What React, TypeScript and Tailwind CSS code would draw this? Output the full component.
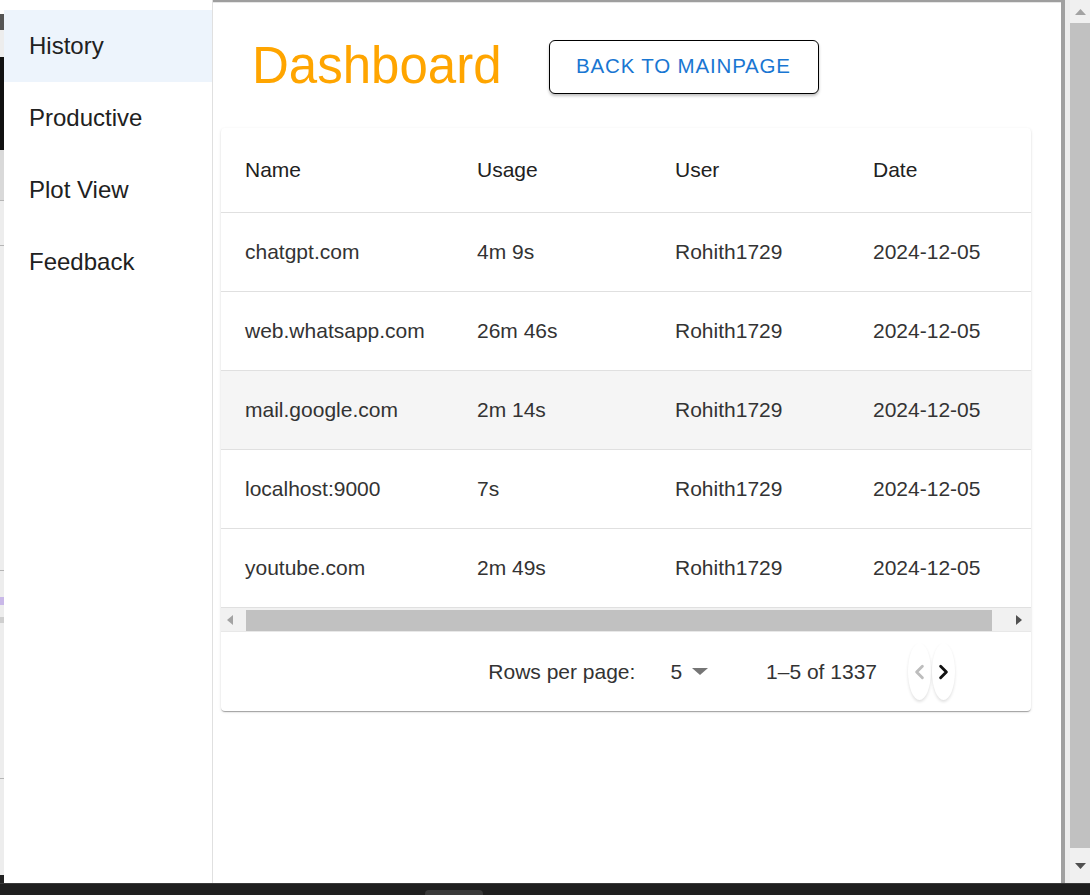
import { ChevronLeft, ChevronRight } from 'lucide-react';

const rows = [
  { name: 'chatgpt.com', usage: '4m 9s', user: 'Rohith1729', date: '2024-12-05' },
  { name: 'web.whatsapp.com', usage: '26m 46s', user: 'Rohith1729', date: '2024-12-05' },
  { name: 'mail.google.com', usage: '2m 14s', user: 'Rohith1729', date: '2024-12-05' },
  { name: 'localhost:9000', usage: '7s', user: 'Rohith1729', date: '2024-12-05' },
  { name: 'youtube.com', usage: '2m 49s', user: 'Rohith1729', date: '2024-12-05' },
];

const navItems = ['History', 'Productive', 'Plot View', 'Feedback'];

// bits of the page behind the popup, peeking out on the left
function BackdropStrip() {
  return (
    <div className="flex w-[4px] flex-col bg-[#ededed]">
      <div className="h-[14px] bg-white" />
      <div className="h-[16px] bg-[#555]" />
      <div className="h-[27px]" />
      <div className="h-[93px] bg-[#111]" />
      <div className="h-[50px] bg-[#d9d9d9]" />
      <div className="h-[1px] bg-[#b5b5b5]" />
      <div className="h-[44px]" />
      <div className="h-[1px] bg-[#b5b5b5]" />
      <div className="h-[324px]" />
      <div className="h-[1px] bg-[#b5b5b5]" />
      <div className="h-[26px]" />
      <div className="h-[8px] bg-[#c9b8e8]" />
      <div className="h-[12px]" />
      <div className="h-[6px] bg-[#cfcfcf]" />
      <div className="h-[155px]" />
      <div className="h-[1px] bg-[#b5b5b5]" />
      <div className="flex-1" />
      <div className="h-[8px] bg-[#222]" />
    </div>
  );
}

function Sidebar() {
  return (
    <div className="flex w-[209px] flex-col border-r border-[#e0e0e0] bg-white pt-[10px]">
      {navItems.map((item, i) => (
        <div
          key={item}
          className={
            i === 0
              ? 'flex h-[72px] items-center bg-[#edf4fc] pl-[25px] text-[24px] text-[#212121]'
              : 'flex h-[72px] items-center pl-[25px] text-[24px] text-[#212121]'
          }
        >
          {item}
        </div>
      ))}
    </div>
  );
}

function TableScrollbar() {
  return (
    <div className="flex h-[24px] items-center bg-[#f1f1f1] border-b border-[#e8e8e8]">
      <div className="flex w-[17px] justify-center">
        <svg width="6" height="10" viewBox="0 0 6 10">
          <polygon points="6,0 6,10 0,5" fill="#a3a3a3" />
        </svg>
      </div>
      <div className="ml-[8px] h-[21px] w-[746px] self-end bg-[#c1c1c1]" />
      <div className="flex flex-1 justify-end pr-[9px]">
        <svg width="6" height="10" viewBox="0 0 6 10">
          <polygon points="0,0 0,10 6,5" fill="#505050" />
        </svg>
      </div>
    </div>
  );
}

function Pagination() {
  return (
    <div className="flex h-[79px] items-center justify-end pr-[76px] text-[21px] text-[#333]">
      <span>Rows per page:</span>
      <span className="ml-[35px]">5</span>
      <svg className="ml-[10px]" width="16" height="7" viewBox="0 0 16 7">
        <polygon points="0,0 16,0 8,7" fill="#757575" />
      </svg>
      <span className="ml-[58px]">1–5 of 1337</span>
      <div className="ml-[31px] flex">
        <div className="flex h-[57px] w-[23px] items-center justify-center rounded-[50%] bg-white shadow-[0_2px_3px_rgba(0,0,0,0.12)]">
          <ChevronLeft size={24} strokeWidth={3} className="text-[#bdbdbd]" />
        </div>
        <div className="ml-[1px] flex h-[57px] w-[23px] items-center justify-center rounded-[50%] bg-white shadow-[0_2px_3px_rgba(0,0,0,0.12)]">
          <ChevronRight size={24} strokeWidth={3} className="text-[#111]" />
        </div>
      </div>
    </div>
  );
}

function UsageTable() {
  return (
    <div className="w-[810px] overflow-hidden rounded-[4px] bg-white shadow-[0px_2px_1px_-1px_rgba(0,0,0,0.2),0px_1px_1px_0px_rgba(0,0,0,0.14),0px_1px_3px_0px_rgba(0,0,0,0.12)]">
      <div className="overflow-hidden">
        <div className="w-[838px]">
          <div className="grid h-[85px] grid-cols-[232px_198px_198px_210px] items-center border-b border-[#e0e0e0] text-[21px] text-[#212121]">
            <div className="pl-[24px]">Name</div>
            <div className="pl-[24px]">Usage</div>
            <div className="pl-[24px]">User</div>
            <div className="pl-[24px]">Date</div>
          </div>
          {rows.map((r, i) => (
            <div
              key={r.name}
              className={
                i === 2
                  ? 'grid h-[79px] grid-cols-[232px_198px_198px_210px] items-center border-b border-[#e0e0e0] bg-[#f5f5f5] text-[21px] text-[#333]'
                  : 'grid h-[79px] grid-cols-[232px_198px_198px_210px] items-center border-b border-[#e0e0e0] text-[21px] text-[#333]'
              }
            >
              <div className="pl-[24px]">{r.name}</div>
              <div className="pl-[24px]">{r.usage}</div>
              <div className="pl-[24px]">{r.user}</div>
              <div className="pl-[24px]">{r.date}</div>
            </div>
          ))}
        </div>
      </div>
      <TableScrollbar />
      <Pagination />
    </div>
  );
}

function PageScrollbar() {
  return (
    <div className="flex w-[20px] flex-col bg-[#f0f0f0]">
      <div className="flex h-[23px] items-center justify-center">
        <svg width="11" height="6" viewBox="0 0 11 6">
          <polygon points="0,6 11,6 5.5,0" fill="#a3a3a3" />
        </svg>
      </div>
      <div className="h-[825px] bg-[#c1c1c1]" />
      <div className="flex flex-1 items-center justify-center">
        <svg width="11" height="6" viewBox="0 0 11 6">
          <polygon points="0,0 11,0 5.5,6" fill="#505050" />
        </svg>
      </div>
    </div>
  );
}

export default function App() {
  return (
    <div className="flex h-[895px] w-[1090px] flex-col overflow-hidden bg-white font-['Liberation_Sans',Arial,sans-serif]">
      <div className="flex min-h-0 flex-1">
        <BackdropStrip />
        <Sidebar />
        <div className="flex w-[848px] flex-col border-t-[2px] border-[#9e9e9e] bg-white">
          <div className="h-[1px] bg-[#e6e6e6]" />
          <div className="flex h-[125px] items-center">
            <h1 className="ml-[39px] text-[51px] leading-none text-[#ffa500]">Dashboard</h1>
            <button className="ml-[47px] mt-[2px] flex h-[54px] w-[270px] items-center justify-center rounded-[6px] border border-black bg-white text-[20.5px] tracking-[0.04em] text-[#1976d2] shadow-[0_2px_3px_rgba(0,0,0,0.25)]">
              BACK TO MAINPAGE
            </button>
          </div>
          <div className="pl-[8px]">
            <UsageTable />
          </div>
        </div>
        <div className="w-[4px] bg-[#9f9f9f]" />
        <div className="w-[5px] bg-[#ececec]" />
        <PageScrollbar />
      </div>
      <div className="h-[12px] border-t border-[#3a3a3a] bg-[#1f1f1f]">
        <div className="ml-[425px] mt-[6px] h-[6px] w-[58px] rounded-t-[4px] bg-[#3a3a3a]" />
      </div>
    </div>
  );
}
